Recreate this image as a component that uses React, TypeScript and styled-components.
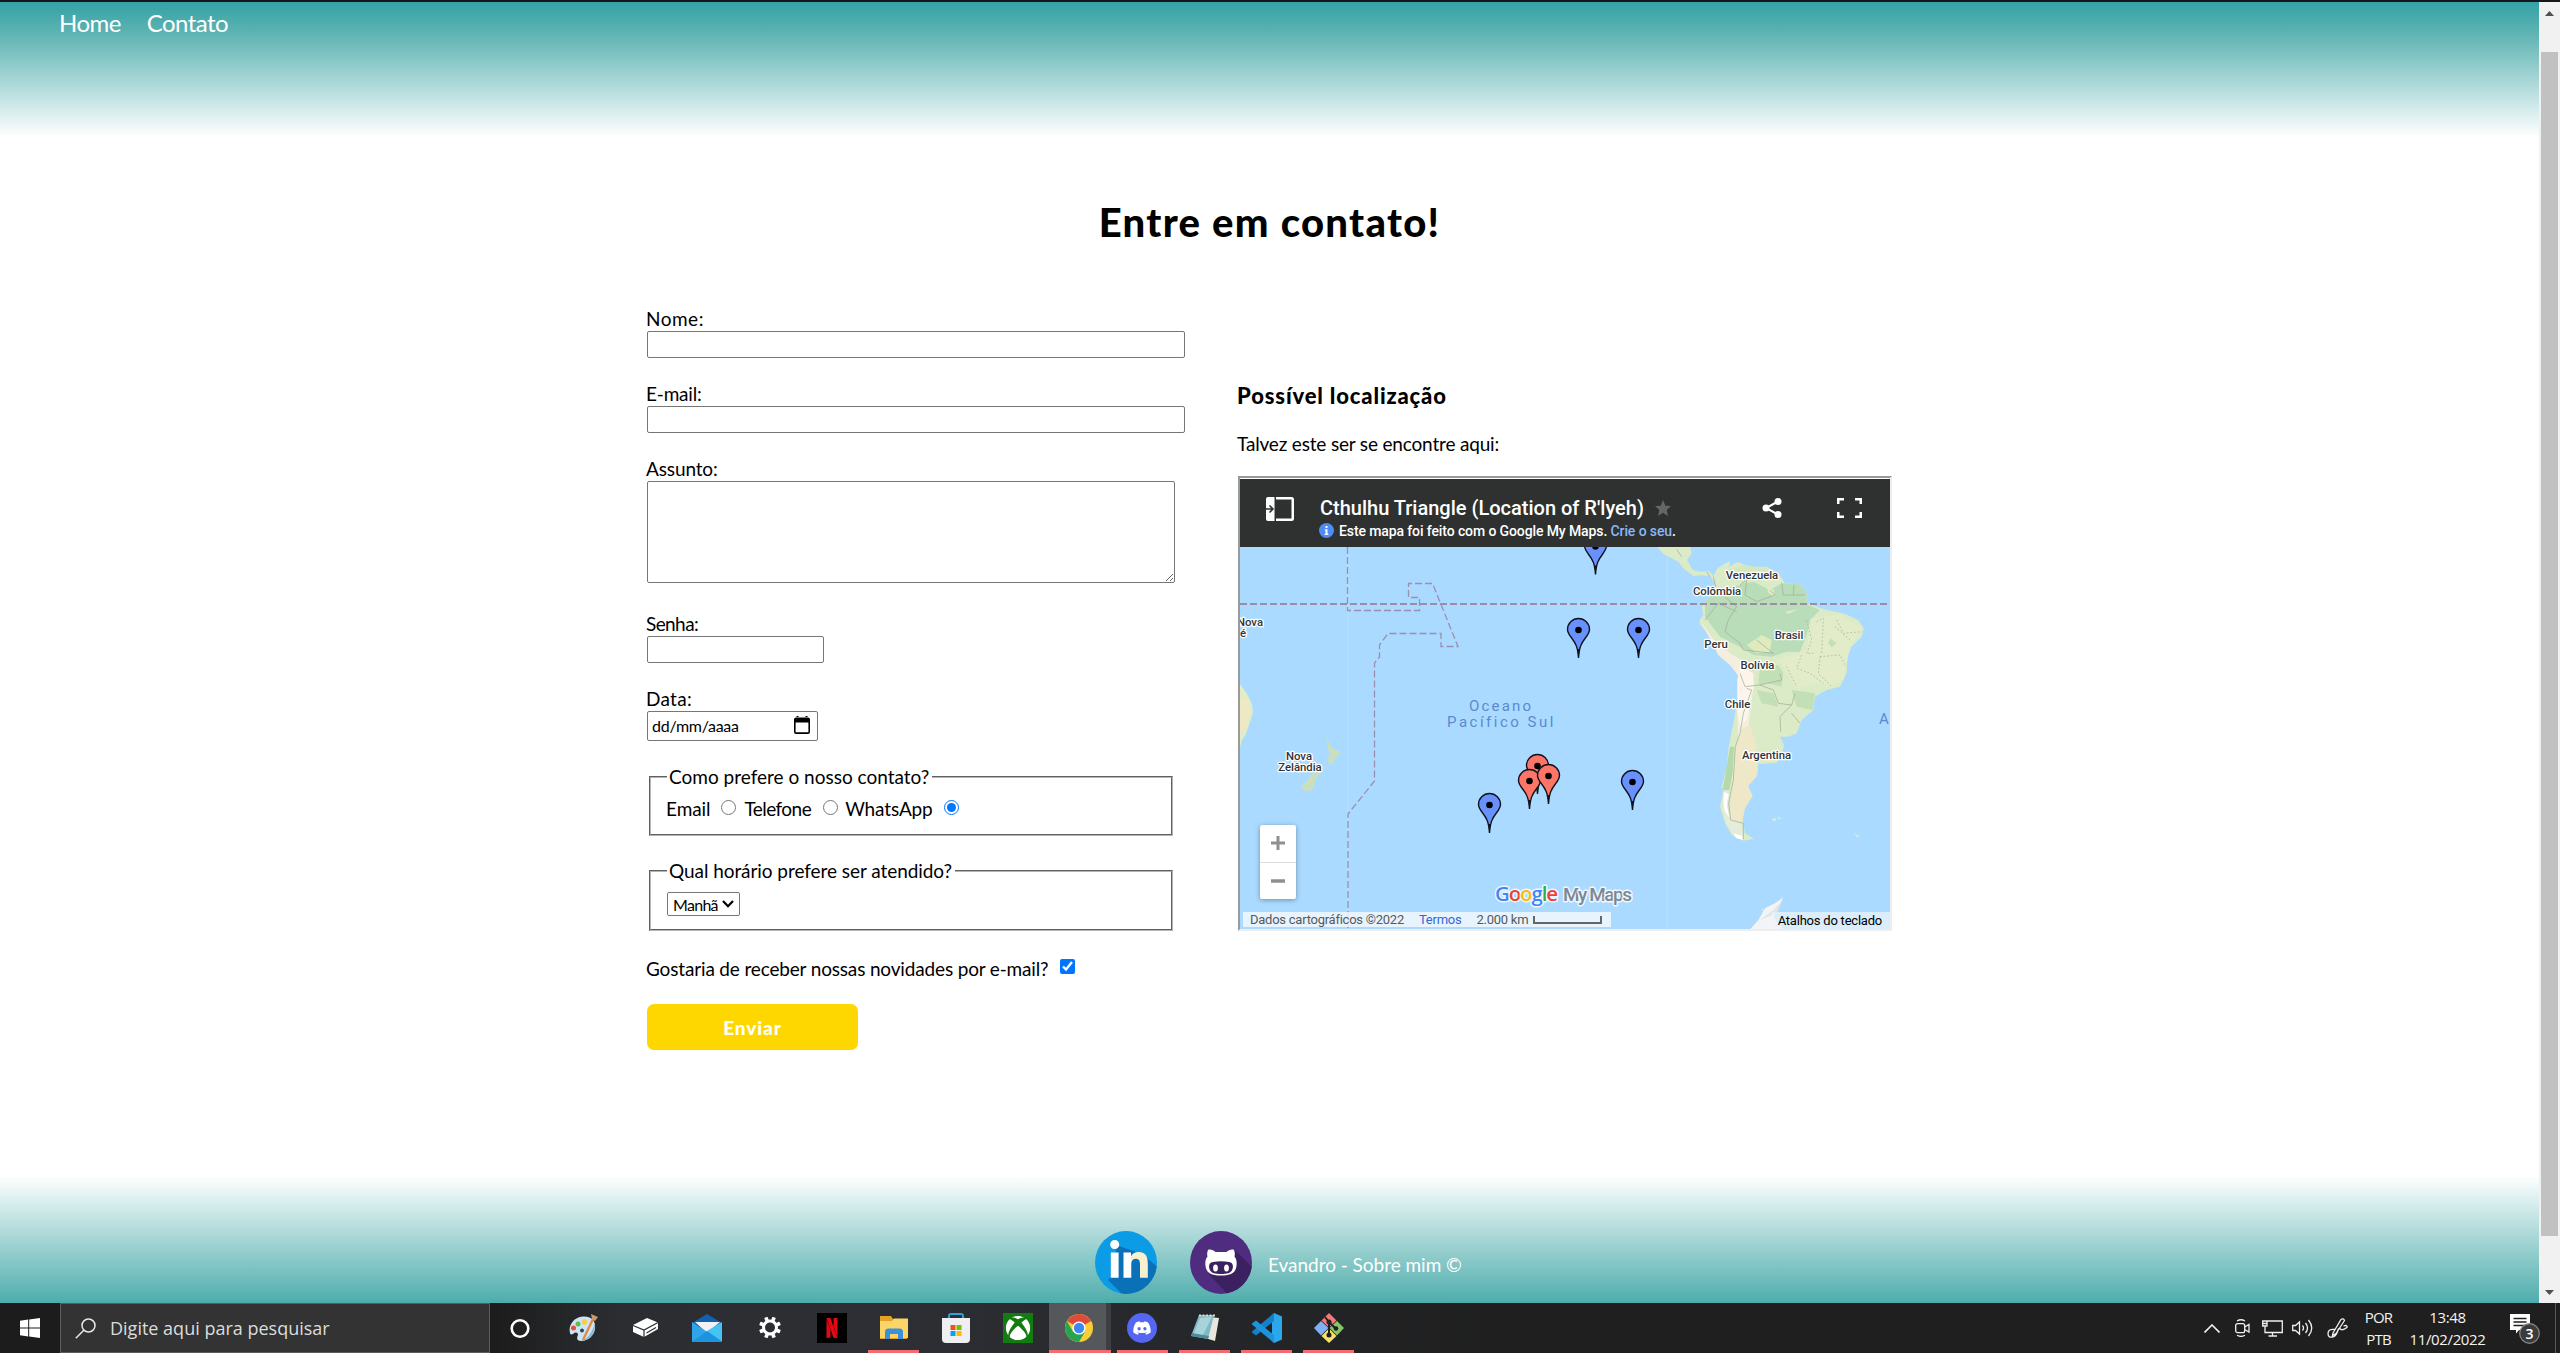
import React from 'react';
import styled, { createGlobalStyle } from 'styled-components';
import { FaDiscord, FaLinkedinIn, FaXbox } from 'react-icons/fa';
import { SiNetflix } from 'react-icons/si';

const GlobalStyle = createGlobalStyle`
  * { box-sizing: border-box; }
  body { margin: 0; background: #fff; overflow: hidden; }
`;

const humanist = `Lato, "Open Sans", sans-serif`;
const roboto = `Roboto, Arial, sans-serif`;

const Screen = styled.div`
  width: 2560px;
  height: 1353px;
  display: flex;
  flex-direction: column;
  overflow: hidden;
  border-top: 2px solid #14181a;
`;
const Browser = styled.div`
  display: flex;
  height: 1301px;
`;
const Page = styled.div`
  width: 2539px;
  display: flex;
  flex-direction: column;
  background: #fff;
  color: #000;
  font-family: ${humanist};
`;
const Header = styled.header`
  height: 135px;
  padding: 9px 0 0 59px;
  display: flex;
  align-items: flex-start;
  gap: 26px;
  background: linear-gradient(to bottom, #34a2a5, #5cb2b2 22%, #fff);
`;
const NavLink = styled.a`
  font-size: 24px;
  line-height: 24px;
  letter-spacing: -0.55px;
  color: #fff;
`;
const Main = styled.main`
  height: 1038px;
  padding-top: 60px;
`;
const Title = styled.h1`
  margin: 0;
  font-size: 40px;
  line-height: 50px;
  font-weight: 900;
  letter-spacing: 1.3px;
  text-align: center;
`;
const Columns = styled.div`
  display: flex;
  padding: 60px 0 0 647px;
`;
const Form = styled.form`
  width: 591px;
  display: flex;
  flex-direction: column;
  align-items: flex-start;
`;
const Field = styled.div<{ $gap?: number }>`
  display: flex;
  flex-direction: column;
  margin-bottom: ${p => p.$gap ?? 24}px;
`;
const Text = styled.span<{ $ls?: number }>`
  margin-left: -1px;
  font-size: 19px;
  line-height: 24px;
  letter-spacing: ${p => p.$ls ?? 0}px;
  white-space: nowrap;
`;
const Input = styled.input<{ $w: number }>`
  width: ${p => p.$w}px;
  height: 27px;
  border: 1px solid #767676;
  border-radius: 2px;
  background: #fff;
`;
const TextArea = styled.textarea`
  width: 528px;
  height: 102px;
  border: 1px solid #767676;
  border-radius: 2px;
  display: block;
`;
const DateBox = styled.div`
  width: 171px;
  height: 30px;
  padding: 0 7px 2px 4px;
  display: flex;
  align-items: center;
  justify-content: space-between;
  border: 1px solid #767676;
  border-radius: 2px;
  font-size: 16px;
  letter-spacing: -0.27px;
`;
const Fieldset = styled.fieldset<{ $h: number; $top: number; $gap: number }>`
  width: 524px;
  height: ${p => p.$h}px;
  margin: 0 2px ${p => p.$gap}px;
  padding: ${p => p.$top}px 16px 0;
  border: 2px groove #b4b4b4;
`;
const Legend = styled.legend`
  height: 24px;
  padding: 0 3px;
  display: flex;
`;
const RadioRow = styled.div`
  display: flex;
  height: 24px;
`;
const Radio = styled.input<{ $right: number; $left: number }>`
  width: 15px;
  height: 15px;
  margin: 3px ${p => p.$right}px 0 ${p => p.$left}px;
`;
const Check = styled.input`
  width: 15px;
  height: 15px;
  margin: 2px 0 0 12px;
`;
const Select = styled.div`
  width: 73px;
  height: 24px;
  padding: 0 5px 0 5px;
  display: flex;
  align-items: center;
  justify-content: space-between;
  border: 1px solid #767676;
  border-radius: 2px;
  font-size: 16px;
  letter-spacing: -0.7px;
`;
const Submit = styled.button`
  width: 211px;
  height: 46px;
  padding: 0;
  margin-top: 23px;
  border: 0;
  border-radius: 7px;
  background: #ffd700;
  color: #fff;
  font: 900 19px ${humanist};
  letter-spacing: 0.9px;
`;
const Location = styled.section`
  width: 654px;
  padding-top: 77px;
  display: flex;
  flex-direction: column;
`;
const Heading = styled.h3`
  margin: 0 0 24px -1px;
  font-size: 22px;
  line-height: 24px;
  font-weight: 900;
  letter-spacing: 0.85px;
`;
const Frame = styled.div`
  height: 455px;
  margin-top: 20px;
  padding-top: 1px;
  border: 2px solid;
  border-color: #9a9a9a #eee #eee #9a9a9a;
  font-family: ${roboto};
`;
const MapHeader = styled.div`
  height: 68px;
  padding: 17px 28px 0 26px;
  display: flex;
  align-items: flex-start;
  background: #2e3130;
  color: #fff;
`;
const MapTitles = styled.div`
  flex: 1;
  margin-left: 26px;
`;
const MapTitle = styled.div`
  display: flex;
  align-items: center;
  gap: 11px;
  font-size: 20px;
  font-weight: 500;
  line-height: 24px;
`;
const MapNote = styled.div`
  display: flex;
  align-items: center;
  margin-left: -1px;
  height: 21px;
  font-size: 14px;
  font-weight: 500;
  letter-spacing: -0.11px;
  white-space: pre;
`;
const NoteLink = styled.span`
  color: #8ab8f4;
`;
const MapArea = styled.div`
  position: relative;
  height: 382px;
  overflow: hidden;
  background: #aadaff;
`;
const Zoom = styled.div`
  position: absolute;
  left: 20px;
  top: 278px;
  width: 36px;
  height: 74px;
  display: flex;
  flex-direction: column;
  background: #fff;
  border-radius: 2px;
  box-shadow: 0 1px 5px rgba(0, 0, 0, 0.35);
`;
const ZoomButton = styled.div`
  flex: 1;
  display: flex;
  align-items: center;
  justify-content: center;
  & + & { border-top: 1px solid #dcdcdc; }
`;
const Attribution = styled.div`
  position: absolute;
  left: 3px;
  top: 365px;
  width: 368px;
  height: 15px;
  padding: 0 9px 0 7px;
  display: flex;
  align-items: center;
  background: rgba(245, 249, 253, 0.82);
  color: #55595d;
  font-size: 13px;
  letter-spacing: -0.25px;
  white-space: nowrap;
`;
const Terms = styled.span`
  margin: 0 15px 0 15px;
  color: #3367d6;
`;
const ScaleBar = styled.span`
  width: 69px;
  height: 8px;
  flex-shrink: 0;
  margin-left: auto;
  border: 2px solid #666;
  border-top: 0;
`;
const Shortcuts = styled.div`
  position: absolute;
  right: 0;
  top: 365px;
  height: 17px;
  padding: 0 8px 0 6px;
  line-height: 17px;
  background: rgba(240, 244, 250, 0.7);
  color: #000;
  font-size: 13px;
  letter-spacing: -0.22px;
`;
const Footer = styled.footer`
  height: 128px;
  padding: 56px 0 0 1095px;
  display: flex;
  align-items: flex-start;
  background: linear-gradient(to bottom, #fff, #4dadac);
  color: #fff;
`;
const Social = styled.svg`
  width: 62px;
  height: 63px;
  margin-right: 33px;
  & + & { margin-right: 17px; }
`;
const Credit = styled(Text)`
  margin-top: 22px;
`;
const Scrollbar = styled.div`
  width: 21px;
  padding: 9px 0 8px;
  display: flex;
  flex-direction: column;
  align-items: center;
  justify-content: space-between;
  background: #f1f1f1;
`;
const Thumb = styled.div`
  width: 17px;
  height: 1184px;
  margin: 36px 0 54px;
  background: #c1c1c1;
`;
const Taskbar = styled.div`
  height: 50px;
  display: flex;
  background: linear-gradient(to right, #1c1c1c 490px, #2b2d31 620px, #2d2f34 900px, #25272a 1180px, #1f1f1f 1500px);
  color: #f3f3f3;
  font-family: "Open Sans", sans-serif;
`;
const Start = styled.div`
  width: 60px;
  display: flex;
  align-items: center;
  justify-content: center;
`;
const Search = styled.div`
  width: 430px;
  height: 50px;
  padding-left: 14px;
  display: flex;
  align-items: center;
  gap: 14px;
  background: #333;
  border: 1px solid #5c5c5c;
  font-size: 18px;
  color: #dcdcdc;
`;
const AppCell = styled.div<{ $open?: boolean; $active?: boolean }>`
  width: 62.15px;
  height: 50px;
  display: flex;
  align-items: center;
  justify-content: center;
  background: ${p => (p.$active
    ? 'linear-gradient(#f26b70, #f26b70) center bottom / 100% 3px no-repeat, linear-gradient(to right, #55585b 57px, #3c3e40 57px)'
    : p.$open ? 'linear-gradient(#f26b70, #f26b70) center bottom / 51px 3px no-repeat' : 'none')};
`;
const Tray = styled.div`
  margin-left: auto;
  display: flex;
`;
const TrayCell = styled.div<{ $w: number }>`
  width: ${p => p.$w}px;
  display: flex;
  align-items: center;
  justify-content: center;
`;
const TrayText = styled.div<{ $w: number; $ls: number }>`
  width: ${p => p.$w}px;
  padding: 3px 2px 0 0;
  text-align: center;
  font-size: 15px;
  line-height: 22px;
  letter-spacing: ${p => p.$ls}px;
`;
const PeekLine = styled.div`
  width: 5px;
  border-left: 1px solid #5a5a5a;
`;

const Pin = ({ x, y, color }: { x: number; y: number; color: string }) => (
  <g transform={`translate(${x} ${y})`}>
    <path d="M0 0C-.8-11-2.6-14.500-7.200-20.500C-9.600-23.700-11-25.700-11-28.600A11 10.900 0 0 1 11-28.600C11-25.700 9.600-23.700 7.200-20.500C2.600-14.500.8-11 0 0Z" fill={color} stroke="#10131c" strokeWidth="1.400" />
    <path d="M0 0L-1-9H1Z" fill="#10131c" />
    <circle cy="-28" r="3.300" fill="#000" />
  </g>
);

const places: [string, number, number][] = [
  ['Venezuela', 1752, 579], ['Colômbia', 1717, 595], ['Brasil', 1789, 639], ['Peru', 1716, 648],
  ['Bolívia', 1757.500, 668.500], ['Chile', 1737.500, 707.500], ['Argentina', 1766.500, 759],
  ['Nova', 1299, 759.500], ['Zelândia', 1300, 771], ['Nova', 1250, 625.500], ['é', 1243, 637],
];
const bluePins = [[1595.500, 574.500], [1578.500, 658], [1638.500, 658], [1489.500, 833], [1632.500, 810]];
const redPins = [[1537.500, 794], [1529.500, 809], [1548.500, 804]];

const MapDrawing = () => (
  <svg width="650" height="382" viewBox="1240 547 650 382" style={{ display: 'block' }}>
    <path d="M1348 547V929M1667 547V929" stroke="#b9e0fd" strokeWidth="1" />
    <path d="M1240 684L1247 694L1252 704L1253 712L1250 722L1246 734L1242 740L1240 748Z" fill="#e2ecc6" />
    <path d="M1240 700l7 -3l4 12l-5 18l-6 6Z" fill="#eee9c4" />
    <path d="M1326 737L1330 744L1334 749L1341 752L1336 758L1332 765L1328 762L1329 753ZM1325 766L1323 771L1316 779L1313 789L1306 792L1301 787L1309 778L1317 769Z" fill="#c9dfc0" />
    <g transform="translate(1650 540) scale(.33333)" strokeLinejoin="round">
      <path d="M22 20L120 20L125 40L112 60L128 90L150 95L178 93L190 108L203 84L222 72L240 64L238 80L262 66L300 80L350 80L385 100L405 130L450 133L468 155L475 190L500 200L530 210L580 220L625 240L641 265L635 290L605 320L592 350L590 400L570 440L530 450L495 470L490 510L455 540L440 580L415 590L390 590L402 615L398 638L380 668L325 672L323 705L310 718L293 738L308 768L288 800L275 820L280 850L285 880L312 897L280 902L245 885L225 850L210 800L220 750L215 740L230 680L236 620L250 550L262 480L264 400L240 375L205 345L185 300L148 250L150 238L160 225L155 200L170 180L190 160L195 130L180 108L155 106L130 108L100 85L85 65L40 42Z" fill="#dbeac7" />
      <path d="M165 185L200 150L270 135L300 120L360 150L395 130L450 133L468 155L475 195L510 210L480 240L470 285L450 335L410 335L365 350L310 345L270 320L210 290L165 230Z" fill="#b9dcb9" />
      <path d="M230 90L280 75L350 85L370 110L330 125L280 130L235 115Z" fill="#d5e8bd" />
      <path d="M350 140L372 150L374 170L355 160ZM290 315L335 285L365 300L360 335L320 340ZM405 215l40 -8l-30 15Z" fill="#dfebbd" />
      <path d="M485 235L570 225L636 265L600 320L588 380L580 420L540 440L500 430L440 445L400 380L380 360L470 330Z" fill="#e3ecc9" />
      <path d="M330 380L385 375L400 400L395 440L350 430L325 435ZM425 450L495 460L488 510L440 500ZM540 295l20 15l-15 12l-10 -12ZM320 450l50 10l15 40l-50 -10Z" fill="#c3dfb5" />
      <path d="M150 240L165 262L192 300L240 340L282 365L300 395L312 435L305 480L295 560L280 600L264 590L262 500L267 410L240 375L205 345L182 300Z" fill="#f5eedf" />
      <path d="M262 420L270 380L310 400L312 440L300 480L290 540L270 560L262 520Z" fill="#fdf5ea" />
      <path d="M272 570L300 555L318 610L322 670L318 712L295 738L307 768L285 805L276 850L240 840L246 700L256 620Z" fill="#eee8c8" />
      <path d="M240 620L252 620L248 700L238 750L218 750L230 680Z" fill="#b4d9ab" />
      <path d="M228 750L240 765L232 800L240 840L275 850L280 898L255 890L228 850L216 800Z" fill="#e4eddc" />
      <path d="M222 755l14 8l-6 30l8 40l-14 -20l-4 -30ZM250 880l26 8l2 12l-20 -6Z" fill="#fff" />
      <g fill="none" stroke="#9fb09a" strokeWidth="2.200">
        <path d="M190 110L200 150L260 200L235 240L225 275L270 310L280 330M165 240L205 190L260 215M270 135L290 120L285 165L320 185L375 165L360 150M395 130L400 165L465 165M432 135L430 165M280 330L370 340L320 300M270 400L285 440L330 435L395 420L390 400M330 435L370 450L385 490L425 495L435 460M425 495L390 530L392 575M425 520L450 550M290 445L305 450L280 520L270 580L256 620L250 720L236 790L242 840L280 850V898" />
        <path d="M470 240L485 300L470 340L490 340M500 245L520 235L515 340M560 240L580 280L635 275M555 260L600 300M510 350L570 345L588 380M510 350L505 400L545 440M455 345L440 385L480 400L520 430M410 380L440 440" strokeDasharray="5 6" />
        <path d="M80 28L95 50M170 95L180 110" />
      </g>
      <path d="M400 1072L375 1090L345 1105L325 1140L300 1168H400L370 1130Z" fill="#f2f4f5" />
      <path d="M330 1140L370 1110L398 1080L380 1120Z" fill="#e2e4e5" />
      <path d="M366 838l10 -4l3 6l-9 4ZM382 832l12 1l-6 6ZM610 878l18 10l-4 5ZM332 1108l8 -2v8Z" fill="#dcebe4" />
    </g>
    <g fill="none" stroke="#9a90ae" strokeWidth="1.300" strokeDasharray="7 3">
      <path d="M1347.500 547V610.500H1419.500V597.500H1408.500V583.500H1432.500L1458 646.500H1441V633.500H1388L1379.500 645V657L1374.500 663V781L1348 814V929" />
      <path d="M1240 604H1890" stroke="#9a8fa2" strokeWidth="1.800" />
    </g>
    <g fontFamily={roboto} fontSize="11.300" fontWeight="500" fill="#303437" stroke="#fff" strokeWidth="2.500" paintOrder="stroke" strokeLinejoin="round" textAnchor="middle">
      {places.map(([name, x, y]) => <text key={`${name}${x}`} x={x} y={y}>{name}</text>)}
    </g>
    <g fontFamily={roboto} fontSize="15" fill="#5c89cf">
      <text x="1469" y="711" letterSpacing="2.200">Oceano</text>
      <text x="1447" y="727" letterSpacing="2.500">Pacífico Sul</text>
      <text x="1879" y="724">A</text>
    </g>
    {bluePins.map(([x, y]) => <Pin key={x} x={x} y={y} color="#6991fd" />)}
    {redPins.map(([x, y]) => <Pin key={x} x={x} y={y} color="#fd7567" />)}
    <g fontFamily="'Open Sans', sans-serif" stroke="#fff" strokeWidth="3" strokeOpacity=".8" paintOrder="stroke" strokeLinejoin="round">
      <text x="1495" y="900.500" fontSize="20.500" fontWeight="600" textLength="63">
        <tspan fill="#4285f4">G</tspan><tspan fill="#ea4335">o</tspan><tspan fill="#fbbc05">o</tspan><tspan fill="#4285f4">g</tspan><tspan fill="#34a853">l</tspan><tspan fill="#ea4335">e</tspan>
      </text>
      <text x="1563" y="900.500" fontSize="19" fontWeight="500" fill="#7b8793" textLength="69" fontFamily={roboto}>My Maps</text>
    </g>
  </svg>
);

const MapFrame = () => (
  <Frame>
    <MapHeader>
      <svg width="28" height="24" viewBox="0 0 28 24" style={{ marginTop: 1 }}>
        <path d="M2 0H8.500V24H2A2 2 0 0 1 0 22V2A2 2 0 0 1 2 0Z" fill="#fff" />
        <path d="M0 12H6M3.500 8.500L7 12L3.500 15.500" fill="none" stroke="#2e3130" strokeWidth="1.600" />
        <path d="M10 1.250H25.500A1.250 1.250 0 0 1 26.750 2.500V21.500A1.250 1.250 0 0 1 25.500 22.750H10" fill="none" stroke="#fff" strokeWidth="2.500" />
      </svg>
      <MapTitles>
        <MapTitle>
          Cthulhu Triangle (Location of R'lyeh)
          <svg width="16" height="16" viewBox="0 0 24 24"><path d="M12 0l3.500 8.500 8.500.5-6.500 6 2 9-7.500-5-7.500 5 2-9L0 9l8.500-.5z" fill="#666" /></svg>
        </MapTitle>
        <MapNote>
          <svg width="15" height="15" viewBox="0 0 15 15" style={{ marginRight: 5 }}>
            <circle cx="7.500" cy="7.500" r="7.500" fill="#4d8bf5" />
            <path d="M6.500 3h2v2h-2zM5.800 6.200h2.700v4.600h1v1.200H5.600v-1.200h.9V7.400h-.7z" fill="#fff" />
          </svg>
          Este mapa foi feito com o Google My Maps. <NoteLink>Crie o seu</NoteLink>.
        </MapNote>
      </MapTitles>
      <svg width="20" height="20" viewBox="0 0 20 20" style={{ marginTop: 2, marginRight: 55 }}>
        <path d="M16 3.500L4 10L16 16.500" fill="none" stroke="#fff" strokeWidth="2" />
        <circle cx="16" cy="3.500" r="3.500" fill="#fff" /><circle cx="4" cy="10" r="3.500" fill="#fff" /><circle cx="16" cy="16.500" r="3.500" fill="#fff" />
      </svg>
      <svg width="25" height="20" viewBox="0 0 25 20" style={{ marginTop: 2 }}>
        <path d="M1.250 6V1.250H7M18 1.250H23.750V6M23.750 14V18.750H18M7 18.750H1.250V14" fill="none" stroke="#fff" strokeWidth="2.500" />
      </svg>
    </MapHeader>
    <MapArea>
      <MapDrawing />
      <Zoom>
        <ZoomButton><svg width="14" height="14"><path d="M7 0V14M0 7H14" stroke="#8f8f8f" strokeWidth="3" /></svg></ZoomButton>
        <ZoomButton><svg width="14" height="4"><path d="M0 2H14" stroke="#8f8f8f" strokeWidth="3.500" /></svg></ZoomButton>
      </Zoom>
      <Attribution>Dados cartográficos ©2022<Terms>Termos</Terms>2.000 km<ScaleBar /></Attribution>
      <Shortcuts>Atalhos do teclado</Shortcuts>
    </MapArea>
  </Frame>
);

const LinkedIn = () => (
  <Social viewBox="0 0 62 63">
    <defs>
      <clipPath id="liClip"><ellipse cx="31" cy="31.500" rx="31" ry="31.500" /></clipPath>
      <linearGradient id="liIn"><stop offset=".56" stopColor="#fff" /><stop offset=".56" stopColor="#f7f0cf" /></linearGradient>
    </defs>
    <g clipPath="url(#liClip)">
      <path d="M0 0H62V63H0Z" fill="#0c9be5" />
      <path d="M13 49L29 65H65V38L47 23L21 14V40Z" fill="#0a70b8" />
    </g>
    <FaLinkedinIn x="12.500" y="9" size={43} fill="url(#liIn)" />
  </Social>
);
const GitHub = () => (
  <Social viewBox="0 0 62 63">
    <defs><clipPath id="ghClip"><ellipse cx="31" cy="31.500" rx="31" ry="31.500" /></clipPath></defs>
    <g clipPath="url(#ghClip)">
      <path d="M0 0H62V63H0Z" fill="#4f2c7f" />
      <path d="M45 19L66 40V66H40L18 42Z" fill="#3c2160" />
    </g>
    <path d="M18 19C20 18 23.500 19 25.500 21H36.500C38.500 19 42 18 44 19C45 21.500 45 23.500 44.500 25.500C46.500 28 47 31 46.500 35C45.500 42 41 44.500 31 44.500S16.500 42 15.500 35C15 31 15.500 28 17.500 25.500C17 23.500 17 21.500 18 19Z" fill="#fff" />
    <path d="M23 31C28 30 34 30 39 31C43 31.500 43.500 35 42.500 38C41.500 42 37 43 31 43S20.500 42 19.500 38C18.500 35 19 31.500 23 31Z" fill="#3c2160" />
    <ellipse cx="25.500" cy="37" rx="2.400" ry="3.600" fill="#fff" /><ellipse cx="36.500" cy="37" rx="2.400" ry="3.600" fill="#fff" />
  </Social>
);

const Icon = ({ children }: { children: React.ReactNode }) => <svg width="30" height="30" viewBox="0 0 30 30">{children}</svg>;

const apps: { name: string; open?: boolean; active?: boolean; icon: React.ReactNode }[] = [
  { name: 'cortana', icon: <Icon><circle cx="14" cy="15.500" r="8.300" fill="none" stroke="#fff" strokeWidth="2.600" /></Icon> },
  { name: 'paint', icon: <Icon>
    <path d="M2 20C0 12 6 4 15 3.500C24 3 28 8 27 16C26 23 20 28 13 28C8 28 9 24 10 22C10 19 7 19 5 21C3 22 2 21 2 20Z" fill="#cfe4f3" />
    <path d="M27 10C28 19 22 28 13 28C20 26 24 20 27 10Z" fill="#86b4d4" />
    <circle cx="5.500" cy="15" r="2.500" fill="#e34f43" /><circle cx="10" cy="11" r="2.500" fill="#65bc4d" /><circle cx="16.500" cy="9" r="2.700" fill="#f3cf45" /><circle cx="14" cy="17.500" r="2" fill="#2b4657" />
    <path d="M15 27L25 6" stroke="#e28a43" strokeWidth="2.300" /><path d="M24 6L23 1L30 4L27 8Z" fill="#c99a6d" />
  </Icon> },
  { name: 'drive', icon: <Icon>
    <path d="M3 12L17 5L28 9.500V16L14 24L3 19Z" fill="#fff" />
    <path d="M3 12.500L14 17L28 9.500M14 17V24" fill="none" stroke="#2b2d31" strokeWidth="1.200" /><path d="M16.500 20L26 14.500" stroke="#2b2d31" strokeWidth="1.200" />
  </Icon> },
  { name: 'mail', icon: <Icon>
    <path d="M0 10L15 1L30 10V16H0Z" fill="#1161ae" /><path d="M3 9H28L15 20Z" fill="#f2f2f2" />
    <path d="M0 9L30 28.500H0Z" fill="#2fa4e8" /><path d="M30 9V28.500H0L15 18Z" fill="#45c3f2" /><path d="M15 18L30 28.500H0Z" fill="#1c93de" />
  </Icon> },
  { name: 'settings', icon: <Icon>
    <circle cx="15" cy="14.500" r="6.500" fill="none" stroke="#fff" strokeWidth="3" />
    {[0, 45, 90, 135, 180, 225, 270, 315].map(a => <rect key={a} x="13.200" y="3.500" width="3.600" height="5" rx=".6" fill="#fff" transform={`rotate(${a + 22.5} 15 14.500)`} />)}
  </Icon> },
  { name: 'netflix', icon: <Icon><path d="M0 0H30V30H0Z" fill="#000" /><SiNetflix x="5" y="5" size={20} color="#e50914" /></Icon> },
  { name: 'explorer', open: true, icon: <Icon>
    <path d="M1 3H12L14 6H28V26H1Z" fill="#e5a125" /><path d="M1 8H13L15 5.500H29V25H1Z" fill="#fbd667" />
    <path d="M6 26V18A3 3 0 0 1 9 15.500H21A3 3 0 0 1 24 18V26H19V21H11V26Z" fill="#3f8fd8" />
  </Icon> },
  { name: 'store', icon: <Icon>
    <path d="M8 9V3A2 2 0 0 1 10 1H20A2 2 0 0 1 22 3V9" fill="none" stroke="#2ea2dd" strokeWidth="2" /><path d="M1 5H29V26A4 4 0 0 1 25 30H5A4 4 0 0 1 1 26Z" fill="#efeff1" />
    <path d="M9.500 12H14.500V17H9.500Z" fill="#f25022" /><path d="M15.500 12H20.500V17H15.500Z" fill="#7fba00" /><path d="M9.500 18H14.500V23H9.500Z" fill="#00a4ef" /><path d="M15.500 18H20.500V23H15.500Z" fill="#ffb900" />
  </Icon> },
  { name: 'xbox', icon: <Icon><path d="M0 0H30V30H0Z" fill="#127c10" /><FaXbox x="2.500" y="2.500" size={25} color="#fff" /></Icon> },
  { name: 'chrome', active: true, icon: <Icon>
    <circle cx="14" cy="15" r="14" fill="#f7cf35" />
    <path d="M14 15L1.880 8A14 14 0 0 1 26.120 8Z" fill="#dd4b3c" /><path d="M1.880 8A14 14 0 0 0 14 29L20 18.500L8 18.500Z" fill="#2aa350" />
    <circle cx="14" cy="15" r="6.600" fill="#fff" /><circle cx="14" cy="15" r="5.200" fill="#3f86f0" />
  </Icon> },
  { name: 'discord', open: true, icon: <Icon><circle cx="15" cy="15" r="15" fill="#5566f2" /><FaDiscord x="5.500" y="5.500" size={19} color="#fff" /></Icon> },
  { name: 'notepad', open: true, icon: <Icon>
    <path d="M10 3L29 5L25 28L15 25Z" fill="#e9e6dd" /><path d="M9 2H24L18 26L1 23Z" fill="#7fb9c6" /><path d="M10 5L22 4L13 22L3 22Z" fill="#a9d3da" /><path d="M9 2.500H25" stroke="#dcdcdc" strokeWidth="2" strokeDasharray="2 1.500" /><path d="M1 23L18 26L19 23L2 20Z" fill="#4f8c9a" />
  </Icon> },
  { name: 'vscode', open: true, icon: <Icon>
    <path d="M22 0L30 3.500V26.500L22 30L20 27V3Z" fill="#2ba7ec" /><path d="M22 0V8L4 22.500L0 19.500V18.500Z" fill="#1480c8" /><path d="M22 30V22L4 7.500L0 10.500V11.500Z" fill="#1c94dd" />
  </Icon> },
  { name: 'git', open: true, icon: <Icon>
    <path d="M15 0L22.500 7.500L15 14.500L7.500 7.500Z" fill="#f4777c" /><path d="M7 8L14.500 15L7 22.500L0 15Z" fill="#7fb0f0" /><path d="M23 8L30 15L23 22.500L15.500 15Z" fill="#86c765" /><path d="M15 15.500L22.500 23L15 30L7.500 23Z" fill="#f8e06b" />
    <path d="M11 4L15 9V23M15 9L22 16" fill="none" stroke="#20201f" strokeWidth="2" /><circle cx="15" cy="9" r="2.500" fill="#20201f" /><circle cx="15" cy="22" r="2.500" fill="#20201f" /><circle cx="22" cy="15.500" r="2.300" fill="#20201f" />
  </Icon> },
];

const line = { fill: 'none', stroke: '#f0f0f0', strokeWidth: 1.3 };

export default function App() {
  return (
    <Screen>
      <GlobalStyle />
      <Browser>
        <Page>
          <Header>
            <NavLink>Home</NavLink>
            <NavLink>Contato</NavLink>
          </Header>
          <Main>
            <Title>Entre em contato!</Title>
            <Columns>
              <Form>
                <Field><Text $ls={0.5}>Nome:</Text><Input $w={538} /></Field>
                <Field><Text $ls={-0.19}>E-mail:</Text><Input $w={538} /></Field>
                <Field $gap={29}><Text $ls={-0.13}>Assunto:</Text><TextArea /></Field>
                <Field><Text $ls={-0.59}>Senha:</Text><Input $w={177} type="password" /></Field>
                <Field>
                  <Text $ls={0.3}>Data:</Text>
                  <DateBox>
                    dd/mm/aaaa
                    <svg width="16" height="18" viewBox="0 0 16 18">
                      <path d="M2 1.500H14A2 2 0 0 1 16 3.500V16A2 2 0 0 1 14 18H2A2 2 0 0 1 0 16V3.500A2 2 0 0 1 2 1.500ZM1.600 6.500V16.300H14.400V6.500ZM2.500 0H4.500V2H2.500ZM11.500 0H13.500V2H11.500Z" fill="#000" fillRule="evenodd" />
                    </svg>
                  </DateBox>
                </Field>
                <Fieldset $h={71} $top={8} $gap={23}>
                  <Legend><Text>Como prefere o nosso contato?</Text></Legend>
                  <RadioRow>
                    <Text $ls={-0.08}>Email</Text><Radio type="radio" name="via" $left={11} $right={9} />
                    <Text $ls={-0.55}>Telefone</Text><Radio type="radio" name="via" $left={12} $right={8} />
                    <Text $ls={-0.13}>WhatsApp</Text><Radio type="radio" name="via" defaultChecked $left={11} $right={0} />
                  </RadioRow>
                </Fieldset>
                <Fieldset $h={72} $top={9} $gap={26}>
                  <Legend><Text $ls={-0.06}>Qual horário prefere ser atendido?</Text></Legend>
                  <Select>Manhã<svg width="12" height="8" viewBox="0 0 12 8"><path d="M1 1L6 6.200L11 1" fill="none" stroke="#000" strokeWidth="2.200" /></svg></Select>
                </Fieldset>
                <RadioRow>
                  <Text $ls={-0.16}>Gostaria de receber nossas novidades por e-mail?</Text>
                  <Check type="checkbox" defaultChecked />
                </RadioRow>
                <Submit type="button">Enviar</Submit>
              </Form>
              <Location>
                <Heading>Possível localização</Heading>
                <Text $ls={-0.17}>Talvez este ser se encontre aqui:</Text>
                <MapFrame />
              </Location>
            </Columns>
          </Main>
          <Footer>
            <LinkedIn />
            <GitHub />
            <Credit $ls={-0.03}>Evandro - Sobre mim ©</Credit>
          </Footer>
        </Page>
        <Scrollbar>
          <svg width="9" height="5"><path d="M4.500 0L9 5H0Z" fill="#505050" /></svg>
          <Thumb />
          <svg width="9" height="5"><path d="M0 0H9L4.500 5Z" fill="#505050" /></svg>
        </Scrollbar>
      </Browser>
      <Taskbar>
        <Start>
          <svg width="20" height="20" viewBox="0 0 20 20"><path d="M0 2.800L8.200 1.600V9.500H0ZM9.200 1.500L20 0V9.500H9.200ZM0 10.500H8.200V18.400L0 17.200ZM9.200 10.500H20V20L9.200 18.500Z" fill="#fff" /></svg>
        </Start>
        <Search>
          <svg width="21" height="21" viewBox="0 0 21 21"><circle cx="13.500" cy="7.500" r="6.500" fill="none" stroke="#e8e8e8" strokeWidth="1.500" /><path d="M9 12L.8 20.200" stroke="#e8e8e8" strokeWidth="1.500" /></svg>
          Digite aqui para pesquisar
        </Search>
        {apps.map(a => <AppCell key={a.name} $open={a.open} $active={a.active}>{a.icon}</AppCell>)}
        <Tray>
          <TrayCell $w={30}><svg width="16" height="9"><path d="M.5 8.500L8 1L15.500 8.500" {...line} strokeWidth="1.600" /></svg></TrayCell>
          <TrayCell $w={30}>
            <svg width="15" height="18" viewBox="0 0 15 18"><rect x=".7" y="4.700" width="9" height="9" rx="2" {...line} /><path d="M9.700 8L14 5.500V13L9.700 10.500M2 2Q6 -.5 10 2M2 16.300Q6 18.500 10 16.300" {...line} /></svg>
          </TrayCell>
          <TrayCell $w={30}>
            <svg width="21" height="17" viewBox="0 0 21 17"><path d="M5.500 1H20.300V12.500H3V6.500M10.500 12.500V16M6.500 16H15M.7 1H5V6H.7ZM.7 3.500H5" {...line} /></svg>
          </TrayCell>
          <TrayCell $w={30}>
            <svg width="21" height="18" viewBox="0 0 21 18"><path d="M.7 6.500H3.500L7.500 3V15L3.500 11.500H.7ZM10.500 6.500Q12.500 9 10.500 11.500M13.500 4Q17.500 9 13.500 14M16.500 1Q23 9 16.500 17" {...line} /></svg>
          </TrayCell>
          <TrayCell $w={40}>
            <svg width="21" height="20" viewBox="0 0 21 20"><path d="M6 15L14 1.500Q16.500 -.3 17.500 2.500L9 15.500L5.500 17.500ZM8 11.500Q1 10.500 1 15.500Q1 19.500 5 19.200Q9 18.500 10.500 13.500Q11.500 8.500 14 11.500Q16 12.500 20 9.500Q20.500 6.500 16.500 8" {...line} /></svg>
          </TrayCell>
          <TrayText $w={45} $ls={-0.8}>POR<br />PTB</TrayText>
          <TrayText $w={93} $ls={-0.36}>13:48<br />11/02/2022</TrayText>
          <TrayCell $w={60}>
            <svg width="32" height="32" viewBox="0 0 32 32">
              <path d="M1 2H21V18H10L7 21.500V18H1Z" fill="#fff" /><path d="M4.500 6.500H17.500M4.500 10H17.500M4.500 13.500H17.500" stroke="#1f1f1f" strokeWidth="1.300" />
              <circle cx="20.500" cy="21.500" r="9.800" fill="#3b3b3b" stroke="#8a8a8a" strokeWidth="1.200" />
              <text x="20.500" y="26.500" textAnchor="middle" fontFamily="'Open Sans', sans-serif" fontSize="14" fontWeight="600" fill="#fff">3</text>
            </svg>
          </TrayCell>
          <PeekLine />
        </Tray>
      </Taskbar>
    </Screen>
  );
}
